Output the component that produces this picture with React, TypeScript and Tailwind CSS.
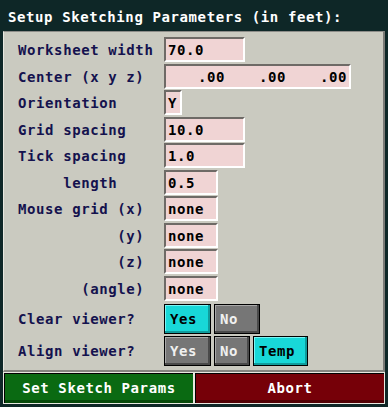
import React from "react";

const font = "font-['DejaVu_Sans_Mono','Liberation_Mono',monospace] font-bold text-[14px] tracking-[0.6px]";

function Field({ value, width }: { value: string; width: string }) {
  return (
    <div
      className={`${width} h-[25px] bg-[#f0d4d4] border-2 border-t-[#6e6a66] border-l-[#6e6a66] border-b-white border-r-white flex items-center pl-[2px] pt-[2px] text-black whitespace-pre`}
    >
      {value}
    </div>
  );
}

function Btn({ label, on, width }: { label: string; on?: boolean; width: string }) {
  return (
    <div
      className={`${width} h-[30px] border border-black flex items-center pl-[5px] pt-[1px] ${
        on
          ? "bg-[#18d8d8] text-black shadow-[inset_-2px_-2px_0_#109c9c,inset_1px_1px_0_#7af4f4]"
          : "bg-[#767676] text-[#f0f0f0] shadow-[inset_-2px_-2px_0_#4a4a4a,inset_1px_1px_0_#a8a8a8]"
      }`}
    >
      {label}
    </div>
  );
}

const rows: { label: string; value: string; width: string }[] = [
  { label: "Worksheet width", value: "70.0", width: "w-[81px]" },
  { label: "Center (x y z)", value: "", width: "" },
  { label: "Orientation", value: "Y", width: "w-[18px]" },
  { label: "Grid spacing", value: "10.0", width: "w-[81px]" },
  { label: "Tick spacing", value: "1.0", width: "w-[81px]" },
  { label: "     length", value: "0.5", width: "w-[54px]" },
  { label: "Mouse grid (x)", value: "none", width: "w-[54px]" },
  { label: "           (y)", value: "none", width: "w-[54px]" },
  { label: "           (z)", value: "none", width: "w-[54px]" },
  { label: "       (angle)", value: "none", width: "w-[54px]" },
];

export default function App() {
  return (
    <div className={`w-[388px] h-[407px] bg-[#0e2727] flex flex-col ${font}`}>
      <div className="h-[31px] pl-[8px] pt-[3px] flex items-center text-white">
        Setup Sketching Parameters (in feet):
      </div>

      <div className="mx-[3px] h-[341px] bg-[#cacac0] border-t border-t-[#8c8c88] border-l border-l-[#e8e8e0] border-r-2 border-r-[#7a7a76] border-b-2 border-b-[#858580] pt-[5px] pl-[14px]">
        {rows.map((r) => (
          <div key={r.label} className="h-[26.55px] flex">
            <div className="w-[146px] h-[25px] pt-[2px] flex items-center text-[#14124e] whitespace-pre">{r.label}</div>
            {r.label.startsWith("Center") ? (
              <div className="w-[187px] h-[25px] bg-[#f0d4d4] border-2 border-t-[#6e6a66] border-l-[#6e6a66] border-b-white border-r-white flex pt-[2px] text-black">
                {[".00", ".00", ".00"].map((v, i) => (
                  <div key={i} className="flex-1 flex items-center justify-end pr-[2px]">
                    {v}
                  </div>
                ))}
              </div>
            ) : (
              <Field value={r.value} width={r.width} />
            )}
          </div>
        ))}

        <div className="h-[32px] flex items-center mt-[1px]">
          <div className="w-[146px] pt-[1px] text-[#14124e]">Clear viewer?</div>
          <div className="flex gap-[3px]">
            <Btn label="Yes" on width="w-[47px]" />
            <Btn label="No" width="w-[46px]" />
          </div>
        </div>
        <div className="h-[32px] flex items-center">
          <div className="w-[146px] pt-[1px] text-[#14124e]">Align viewer?</div>
          <div className="flex gap-[3px]">
            <Btn label="Yes" width="w-[47px]" />
            <Btn label="No" width="w-[36px]" />
            <Btn label="Temp" on width="w-[55px]" />
          </div>
        </div>
      </div>

      <div className="mx-[3px] flex h-[32px]">
        <div className="w-[191px] border border-[#e8e8e0] flex">
          <div className="flex-1 bg-[#0a6a12] border-t border-l border-black shadow-[inset_0_-3px_0_#064a0a] flex items-center justify-center text-white">
            Set Sketch Params
          </div>
        </div>
        <div className="flex-1 border border-[#e8e8e0] flex">
          <div className="flex-1 bg-[#760008] border-t border-l border-black shadow-[inset_0_-3px_0_#520004] flex items-center justify-center text-white">
            Abort
          </div>
        </div>
      </div>
    </div>
  );
}
